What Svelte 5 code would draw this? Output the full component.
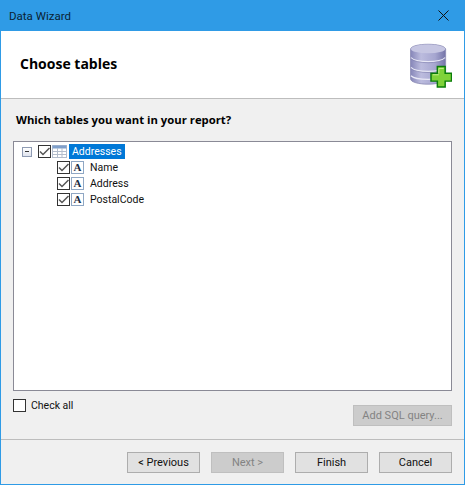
<script>
  const columns = ["Name", "Address", "PostalCode"];
</script>

{#snippet checkmark()}
  <span class="check">
    <svg width="13" height="13" viewBox="0 0 13 13">
      <path d="M2 6.5 L5 9.5 L11.5 3" fill="none" stroke="#555" stroke-width="1.5" />
    </svg>
  </span>
{/snippet}

<div class="window">
  <div class="titlebar">
    <span>Data Wizard</span>
    <svg class="close" width="11" height="11" viewBox="0 0 11 11">
      <path d="M0.5 0.5 L10.5 10.5 M10.5 0.5 L0.5 10.5" stroke="#111" stroke-width="1" fill="none" />
    </svg>
  </div>

  <div class="header">
    <h1>Choose tables</h1>
    <svg class="dbicon" width="42" height="45" viewBox="0 0 43 45">
      <defs>
        <linearGradient id="cyl" x1="0" x2="1" y1="0" y2="0">
          <stop offset="0" stop-color="#8585b8" />
          <stop offset="0.3" stop-color="#bcbcde" />
          <stop offset="0.7" stop-color="#a6a6d0" />
          <stop offset="1" stop-color="#7474a8" />
        </linearGradient>
      </defs>
      <path d="M0.5 6 C0.5 -1 36.5 -1 36.5 6 L36.5 36 C36.5 43.5 0.5 43.5 0.5 36 Z" fill="url(#cyl)" stroke="#8a8ab4" stroke-width="0.8" />
      <ellipse cx="18.5" cy="5.5" rx="17.5" ry="4.5" fill="#c6c6e2" />
      <path d="M1 14.5 C6 20 31 20 36 14.5 M1 24.5 C6 30 31 30 36 24.5 M1 33 C6 38 31 38 36 33" fill="none" stroke="#e8e8f6" stroke-width="1.3" />
      <path d="M1 15.5 C6 21 31 21 36 15.5 M1 25.5 C6 31 31 31 36 25.5" fill="none" stroke="#7d7dab" stroke-width="0.6" />
      <path d="M28 23.5 H36 V30.5 H42.5 V38.5 H36 V44.5 H28 V38.5 H21.5 V30.5 H28 Z" fill="#7fd23a" stroke="#0b7d0b" stroke-width="1.5" />
      <path d="M29.5 30.5 V25.5 H34.5 M23.5 32 H29.5" fill="none" stroke="#c6f08c" stroke-width="1" />
    </svg>
  </div>

  <div class="body">
    <p class="question">Which tables you want in your report?</p>

    <div class="tree">
      <div class="row root">
        <span class="expander"></span>
        {@render checkmark()}
        <svg class="grid-icon" width="15" height="13" viewBox="0 0 15 13">
          <rect x="0.5" y="0.5" width="14" height="12" fill="#fff" stroke="#b3bdcc" />
          <rect x="0.5" y="0.5" width="14" height="3" fill="#7f9fcb" />
          <path d="M5.5 3 V12 M10 3 V12 M1 6.5 H14 M1 9.5 H14" stroke="#b3bdcc" fill="none" />
        </svg>
        <span class="selected">Addresses</span>
      </div>
      {#each columns as column}
        <div class="row child">
          {@render checkmark()}
          <span class="field">A</span>
          <span class="label">{column}</span>
        </div>
      {/each}
    </div>

    <div class="options">
      <label class="check-all">
        <span class="box"></span>
        Check all
      </label>
      <button class="btn sql" disabled>Add SQL query...</button>
    </div>
  </div>

  <div class="footer">
    <button class="btn">&lt; Previous</button>
    <button class="btn" disabled>Next &gt;</button>
    <button class="btn">Finish</button>
    <button class="btn">Cancel</button>
  </div>
</div>

<style>
  :global(body) {
    margin: 0;
  }

  .window {
    width: 465px;
    height: 485px;
    box-sizing: border-box;
    border: 1px solid #2f9be6;
    border-top: 0;
    display: flex;
    flex-direction: column;
    background: #f0f0f0;
    font-family: Roboto, "Open Sans", sans-serif;
    font-size: 10.5px;
    color: #111;
  }

  .titlebar {
    height: 31px;
    flex: none;
    margin: 0 -1px;
    padding: 0 16px 0 9px;
    background: #2f9be6;
    display: flex;
    align-items: center;
    justify-content: space-between;
    font-size: 11.5px;
    color: #0b2233;
  }

  .header {
    height: 68px;
    flex: none;
    box-sizing: border-box;
    background: #fff;
    border-bottom: 1px solid #bdbdbd;
    padding: 0 12px 0 19px;
    display: flex;
    align-items: center;
    justify-content: space-between;
  }

  h1 {
    margin: 0 0 3px;
    font-family: "Open Sans", sans-serif;
    font-size: 14px;
    font-weight: 700;
    color: #000;
  }

  .dbicon {
    margin-top: 1px;
  }

  .body {
    flex: 1;
    display: flex;
    flex-direction: column;
    padding: 0 12px;
    min-height: 0;
  }

  .question {
    margin: 0;
    height: 42px;
    flex: none;
    display: flex;
    align-items: center;
    padding: 0 0 1px 3px;
    box-sizing: border-box;
    font-family: "Open Sans", sans-serif;
    font-weight: 700;
    font-size: 11.3px;
    color: #000;
  }

  .tree {
    height: 250px;
    flex: none;
    box-sizing: border-box;
    border: 1px solid #8a8a96;
    background: #fff;
    padding: 2px 0 0 8px;
  }

  .row {
    height: 16px;
    display: flex;
    align-items: center;
  }

  .root {
    height: 15px;
  }

  .child {
    margin-left: 35px;
  }

  .expander {
    width: 8px;
    height: 8px;
    margin-right: 6px;
    border: 1px solid #8f9bb3;
    background: linear-gradient(#fff, #dfe3ee);
    position: relative;
    flex: none;
  }

  .expander::after {
    content: "";
    position: absolute;
    left: 2px;
    right: 2px;
    top: 3px;
    height: 1px;
    background: #333;
  }

  .check {
    width: 11px;
    height: 11px;
    border: 1px solid #333;
    padding: 0;
    display: flex;
    flex: none;
    background: #fff;
  }

  .check svg {
    margin: -1px;
  }

  .grid-icon {
    margin-left: 1px;
    flex: none;
  }

  .selected {
    margin-left: 2px;
    padding: 0 3px;
    background: #0078d7;
    color: #fff;
    line-height: 15px;
  }

  .field {
    width: 11px;
    height: 11px;
    margin-left: 1px;
    border: 1px solid #8fa7c4;
    display: flex;
    align-items: center;
    justify-content: center;
    font-family: "Liberation Serif", serif;
    font-weight: 700;
    font-size: 11px;
    color: #1c2c44;
    flex: none;
  }

  .label {
    margin-left: 6px;
  }

  .options {
    display: flex;
    justify-content: space-between;
    align-items: flex-start;
    padding-top: 8px;
  }

  .check-all {
    display: flex;
    align-items: center;
    gap: 5px;
    height: 13px;
  }

  .box {
    width: 11px;
    height: 11px;
    border: 1px solid #333;
    background: #fff;
  }

  .btn {
    width: 73px;
    height: 21px;
    padding: 0;
    border: 1px solid #adadad;
    background: #e1e1e1;
    font: inherit;
    font-size: 11px;
    color: #111;
  }

  .btn:disabled {
    background: #cccccc;
    border-color: #bfbfbf;
    color: #838383;
  }

  .sql {
    width: 99px;
    margin-top: 6px;
  }

  .footer {
    height: 45px;
    flex: none;
    box-sizing: border-box;
    border-top: 1px solid #bdbdbd;
    padding: 12px 12px 0 0;
    display: flex;
    justify-content: flex-end;
    gap: 11px;
  }
</style>
